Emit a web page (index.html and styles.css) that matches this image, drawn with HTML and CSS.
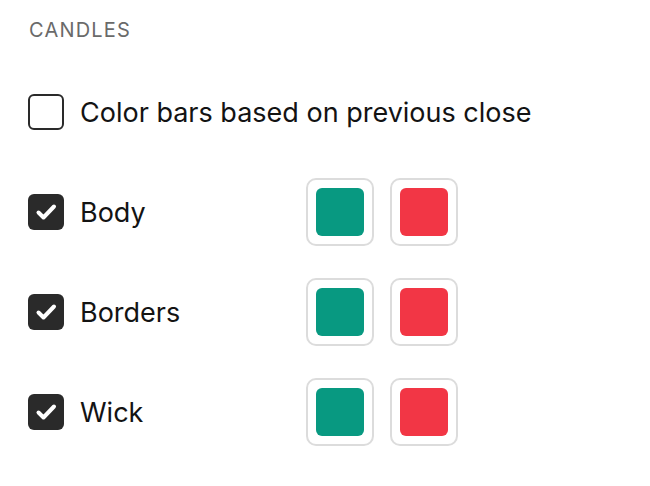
FILE: index.html
```html
<!DOCTYPE html>
<html>
<head>
<meta charset="utf-8">
<link rel="stylesheet" href="styles.css">
</head>
<body>
<div class="panel">
  <div class="title">CANDLES</div>
  <div class="row">
    <span class="cb"></span>
    <span class="label">Color bars based on previous close</span>
  </div>
  <div class="row">
    <span class="cb checked"><svg viewBox="0 0 36 36" width="36" height="36"><path d="M10.5 18.5 L15.5 23.5 L26 12.5" fill="none" stroke="#fff" stroke-width="4" stroke-linecap="round" stroke-linejoin="round"/></svg></span>
    <span class="label name">Body</span>
    <div class="swatches">
      <span class="sw"><span class="fill green"></span></span>
      <span class="sw"><span class="fill red"></span></span>
    </div>
  </div>
  <div class="row">
    <span class="cb checked"><svg viewBox="0 0 36 36" width="36" height="36"><path d="M10.5 18.5 L15.5 23.5 L26 12.5" fill="none" stroke="#fff" stroke-width="4" stroke-linecap="round" stroke-linejoin="round"/></svg></span>
    <span class="label name">Borders</span>
    <div class="swatches">
      <span class="sw"><span class="fill green"></span></span>
      <span class="sw"><span class="fill red"></span></span>
    </div>
  </div>
  <div class="row">
    <span class="cb checked"><svg viewBox="0 0 36 36" width="36" height="36"><path d="M10.5 18.5 L15.5 23.5 L26 12.5" fill="none" stroke="#fff" stroke-width="4" stroke-linecap="round" stroke-linejoin="round"/></svg></span>
    <span class="label name">Wick</span>
    <div class="swatches">
      <span class="sw"><span class="fill green"></span></span>
      <span class="sw"><span class="fill red"></span></span>
    </div>
  </div>
</div>
</body>
</html>
```
FILE: styles.css
```css
html, body {
  margin: 0;
  padding: 0;
  background: #fff;
}
.panel {
  font-family: Inter, "Noto Sans", sans-serif;
  padding: 18px 0 0 28px;
  display: flex;
  flex-direction: column;
}
.title {
  font-size: 20px;
  line-height: 24px;
  color: #6a6a6a;
  letter-spacing: 1.2px;
  margin-left: 1px;
  height: 44px;
}
.row {
  display: flex;
  align-items: center;
  height: 100px;
}
.cb {
  box-sizing: border-box;
  width: 36px;
  height: 36px;
  border: 2px solid #2a2a2a;
  border-radius: 6px;
  flex: none;
  display: flex;
}
.cb.checked {
  background: #2a2a2a;
  border: none;
}
.label {
  margin-left: 16px;
  font-size: 27px;
  color: #131313;
}
.name {
  width: 226px;
}
.swatches {
  display: flex;
  gap: 16px;
}
.sw {
  box-sizing: border-box;
  width: 68px;
  height: 68px;
  border: 2px solid #dcdcdc;
  border-radius: 10px;
  display: flex;
  align-items: center;
  justify-content: center;
}
.fill {
  width: 48px;
  height: 48px;
  border-radius: 6px;
}
.green { background: #089981; }
.red { background: #f23645; }
```
